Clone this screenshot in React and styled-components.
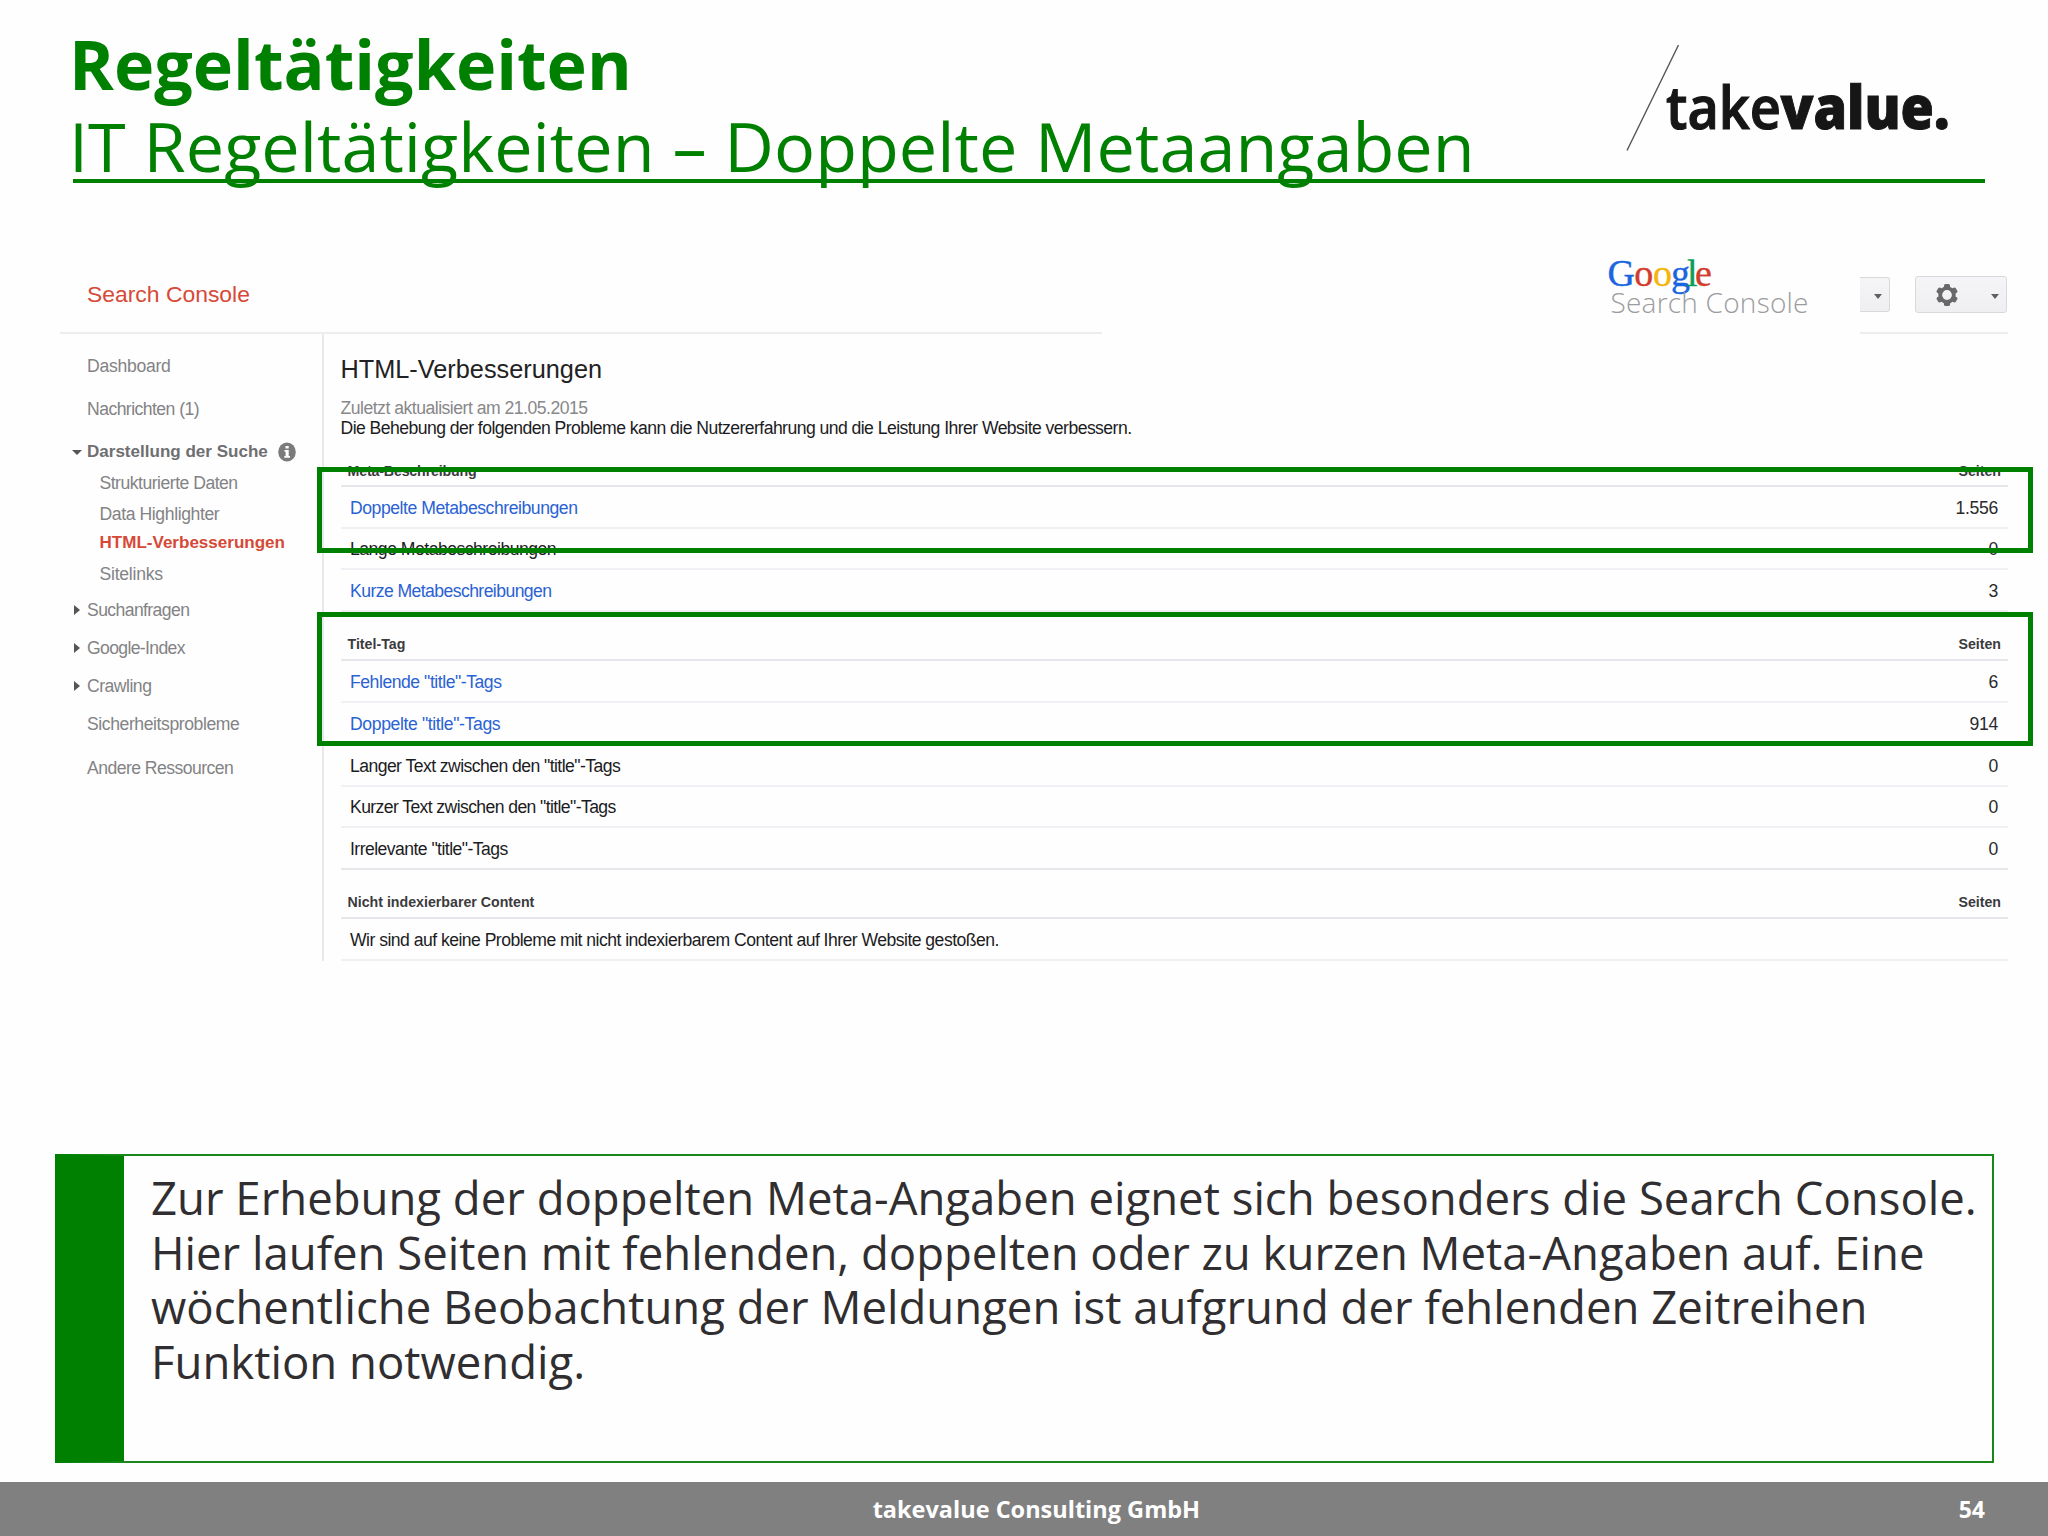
import React from 'react';
import styled, { createGlobalStyle } from 'styled-components';

const GlobalStyle = createGlobalStyle`
  * {
    box-sizing: border-box;
  }
  body {
    margin: 0;
    background-color: #fff;
  }
`;

const Slide = styled.div`
  width: 2048px;
  height: 1536px;
  display: flex;
  flex-direction: column;
  overflow: hidden;
  background-color: #fefefe;
  font-family: 'Open Sans', sans-serif;
`;

const Header = styled.header`
  display: flex;
  justify-content: space-between;
  height: 183px;
  margin: 0 63px 0 73px;
  padding-top: 23px;
  border-bottom: 4px solid #008000;
`;

const Titles = styled.div`
  margin-left: -4px;
  color: #008000;
`;

const Title = styled.h1`
  margin: 0;
  font-size: 68.2px;
  line-height: 82px;
  font-weight: 700;
  white-space: nowrap;
`;

const Subtitle = styled.h2`
  margin: 0;
  font-size: 68.35px;
  line-height: 82px;
  font-weight: 400;
  letter-spacing: 0.03px;
  white-space: nowrap;
`;

const BrandLogo = styled.svg`
  width: 350px;
  height: 120px;
  margin: 17px 27px 0 0;
  overflow: visible;
`;

const Console = styled.section`
  flex: 1;
  margin: 0 40px 0 60px;
  font-family: 'Liberation Sans', Arial, sans-serif;
`;

const TopBar = styled.div`
  display: flex;
  height: 151px;
`;

const ProductBar = styled.div`
  width: 1042px;
  padding: 97px 0 0 27px;
  border-bottom: 2px solid #ededed;
  color: #d64937;
  font-size: 22.9px;
  line-height: 28px;
`;

const GoogleLogo = styled.svg`
  width: 220px;
  height: 70px;
  margin: 67px 40px 0 498px;
`;

const Actions = styled.div`
  display: flex;
  align-items: flex-start;
  width: 148px;
  padding-top: 93px;
  border-bottom: 2px solid #ededed;
`;

const ActionButton = styled.button`
  display: flex;
  align-items: center;
  justify-content: flex-end;
  width: ${(props) => props.$width}px;
  height: ${(props) => props.$height}px;
  margin: ${(props) => props.$margin};
  padding: 0 7px 0 0;
  border: 1px solid #d9d9dc;
  border-left-width: ${(props) => (props.$cut ? 0 : 1)}px;
  border-radius: ${(props) => (props.$cut ? '0 3px 3px 0' : '3px')};
  background: linear-gradient(#f5f4f6, #efeef1);
`;

const Gear = styled.svg`
  width: 24px;
  height: 24px;
  margin-right: 32px;
`;

const Caret = styled.span`
  margin-top: 3px;
  border-left: 4.5px solid transparent;
  border-right: 4.5px solid transparent;
  border-top: 5px solid #606062;
`;

const Body = styled.div`
  display: flex;
`;

const Sidebar = styled.nav`
  width: 264px;
  height: 627px;
  border-right: 2px solid #e9e9eb;
`;

const NavItem = styled.div`
  display: flex;
  align-items: center;
  margin-top: ${(props) => props.$gap}px;
  padding-left: ${(props) => (props.$sub ? 12.5 : 0)}px;
  height: 20px;
  line-height: 20px;
  font-size: ${(props) => (props.$bold ? 17.05 : 17.6)}px;
  font-weight: ${(props) => (props.$bold ? 700 : 400)};
  letter-spacing: ${(props) => props.$tracking || 0}px;
  color: ${(props) => (props.$active ? '#d64937' : props.$bold ? '#6f6f71' : '#838385')};
  white-space: nowrap;
`;

const Marker = styled.span`
  display: flex;
  justify-content: center;
  width: 9px;
  margin: 0 6px 0 12px;
`;

const Arrow = styled.span`
  border: 5px solid transparent;
  border-width: ${(props) => (props.$open ? '5px 5px 0' : '5px 0 5px 6px')};
  border-${(props) => (props.$open ? 'top' : 'left')}-color: #555;
`;

const InfoIcon = styled.svg`
  width: 18px;
  height: 20px;
  margin-left: 10px;
`;

const Main = styled.main`
  flex: 1;
  padding: 20px 0 0 16.5px;
`;

const PageHeading = styled.h3`
  margin: 0 0 14px;
  font-size: 25.3px;
  line-height: 30px;
  font-weight: 400;
  color: #222;
`;

const Note = styled.p`
  margin: 0;
  font-size: 17.6px;
  line-height: 20px;
  color: ${(props) => (props.$muted ? '#88888a' : '#1c1c1e')};
  letter-spacing: ${(props) => props.$tracking}px;
`;

const GroupHeader = styled.div`
  display: flex;
  justify-content: space-between;
  align-items: flex-end;
  height: ${(props) => props.$height}px;
  padding: 0 7px ${(props) => props.$bottom}px;
  border-bottom: 2px solid #e7e6ea;
  font-size: 14.2px;
  line-height: 20px;
  font-weight: 700;
  color: #3b3b3d;
`;

const GroupTitle = styled.span`
  letter-spacing: ${(props) => props.$tracking || 0}px;
`;

const Row = styled.div`
  display: flex;
  justify-content: space-between;
  align-items: center;
  height: ${(props) => props.$height}px;
  padding: 2px 10px 0 9.5px;
  border-bottom: 2px solid ${(props) => (props.$last ? '#e7e6ea' : '#f1f0f4')};
  font-size: 17.6px;
  color: #1c1c1e;
`;

const RowLabel = styled.span`
  color: ${(props) => (props.$link ? '#2a62d4' : '#1c1c1e')};
  letter-spacing: ${(props) => props.$tracking}px;
`;

const RowValue = styled.span`
  letter-spacing: -0.3px;
  color: #2a2a2c;
`;

const Highlight = styled.div`
  position: absolute;
  left: 317px;
  top: ${(props) => props.$top}px;
  width: 1716px;
  height: ${(props) => props.$height}px;
  border: 5px solid #008000;
`;

const Callout = styled.section`
  height: 309px;
  margin: 0 54px 19px 55px;
  padding: 14px 0 0 27px;
  border: 2px solid #1a871a;
  border-left: 69px solid #008000;
  color: #302e30;
  font-size: 45.5px;
  line-height: 54.6px;
  white-space: nowrap;
`;

const Footer = styled.footer`
  display: flex;
  align-items: center;
  height: 54px;
  padding: 0 63px 0 88px;
  background-color: #808080;
  color: #fff;
  font-size: 23.5px;
  line-height: 54px;
  font-weight: 700;
`;

const Company = styled.span`
  flex: 1;
  padding-left: 26px;
  text-align: center;
`;

const PageNumber = styled.span`
  font-size: 23px;
`;

const navItems = [
  { label: 'Dashboard', gap: 22, tracking: -0.28 },
  { label: 'Nachrichten (1)', gap: 23, tracking: -0.55 },
  { label: 'Darstellung der Suche', gap: 23, bold: true, open: true, info: true },
  { label: 'Strukturierte Daten', gap: 11, sub: true, tracking: -0.5 },
  { label: 'Data Highlighter', gap: 11, sub: true, tracking: -0.4 },
  { label: 'HTML-Verbesserungen', gap: 9, sub: true, bold: true, active: true },
  { label: 'Sitelinks', gap: 11, sub: true, tracking: -0.25 },
  { label: 'Suchanfragen', gap: 16, closed: true, tracking: -0.6 },
  { label: 'Google-Index', gap: 18, closed: true, tracking: -0.65 },
  { label: 'Crawling', gap: 18, closed: true, tracking: -0.5 },
  { label: 'Sicherheitsprobleme', gap: 18, tracking: -0.42 },
  { label: 'Andere Ressourcen', gap: 24, tracking: -0.55 },
];

const groups = [
  {
    title: 'Meta-Beschreibung',
    height: 49,
    bottom: 4,
    tracking: -0.15,
    rows: [
      { label: 'Doppelte Metabeschreibungen', value: '1.556', link: true, height: 42, tracking: -0.45 },
      { label: 'Lange Metabeschreibungen', value: '0', height: 41, tracking: -0.5 },
      { label: 'Kurze Metabeschreibungen', value: '3', link: true, height: 42, tracking: -0.57 },
    ],
  },
  {
    title: 'Titel-Tag',
    height: 49,
    bottom: 5,
    rows: [
      { label: 'Fehlende "title"-Tags', value: '6', link: true, height: 42, tracking: -0.46 },
      { label: 'Doppelte "title"-Tags', value: '914', link: true, height: 42, tracking: -0.38 },
      { label: 'Langer Text zwischen den "title"-Tags', value: '0', height: 42, tracking: -0.56 },
      { label: 'Kurzer Text zwischen den "title"-Tags', value: '0', height: 41, tracking: -0.6 },
      { label: 'Irrelevante "title"-Tags', value: '0', height: 42, tracking: -0.55, last: true },
    ],
  },
  {
    title: 'Nicht indexierbarer Content',
    height: 49,
    bottom: 5,
    rows: [
      {
        label: 'Wir sind auf keine Probleme mit nicht indexierbarem Content auf Ihrer Website gestoßen.',
        value: '',
        height: 42,
        tracking: -0.53,
      },
    ],
  },
];

const TakevalueLogo = () => (
  <BrandLogo viewBox="0 0 350 120">
    <line x1="70.5" y1="5" x2="19" y2="110.5" stroke="#555" strokeWidth="1.4" />
    <g fill="#161616" stroke="#161616" fontFamily="'Open Sans', sans-serif" fontSize="60.5">
      <text x="58" y="88.5" fontWeight="600" strokeWidth="1.2" textLength="115" lengthAdjust="spacingAndGlyphs">
        take
      </text>
      <text x="172.5" y="88.5" fontWeight="800" strokeWidth="1" textLength="169" lengthAdjust="spacingAndGlyphs">
        value.
      </text>
    </g>
  </BrandLogo>
);

const GoogleSearchConsole = () => (
  <GoogleLogo viewBox="0 0 220 70">
    <g fontFamily="'Liberation Serif', serif" fontSize="38" strokeWidth="0.4">
      <text y="36">
        <tspan x="7.5" fill="#1a66e0" stroke="#1a66e0">G</tspan>
        <tspan x="34.3" fill="#d23c2c" stroke="#d23c2c">o</tspan>
        <tspan x="53" fill="#f5b50f" stroke="#f5b50f">o</tspan>
        <tspan x="71" fill="#1a66e0" stroke="#1a66e0">g</tspan>
        <tspan x="87" fill="#0f9d58" stroke="#0f9d58">l</tspan>
        <tspan x="95" fill="#d23c2c" stroke="#d23c2c">e</tspan>
      </text>
    </g>
    <text
      x="10.5"
      y="63"
      fill="#9c9c9e"
      fontFamily="'Open Sans', sans-serif"
      fontSize="28"
      fontWeight="300"
      textLength="198"
    >
      Search Console
    </text>
  </GoogleLogo>
);

const GearIcon = () => (
  <Gear viewBox="0 0 24 24">
    <g fill="#69696b">
      {[0, 60, 120, 180, 240, 300].map((angle) => (
        <rect key={angle} x="9" y="1" width="6" height="6" rx="1.5" transform={`rotate(${angle} 12 12)`} />
      ))}
    </g>
    <circle cx="12" cy="12" r="6.8" fill="none" stroke="#69696b" strokeWidth="3.8" />
  </Gear>
);

const App = () => {
  return (
    <>
      <GlobalStyle />
      <Slide>
        <Header>
          <Titles>
            <Title>Regeltätigkeiten</Title>
            <Subtitle>IT Regeltätigkeiten – Doppelte Metaangaben</Subtitle>
          </Titles>
          <TakevalueLogo />
        </Header>

        <Console>
          <TopBar>
            <ProductBar>Search Console</ProductBar>
            <GoogleSearchConsole />
            <Actions>
              <ActionButton $width={30} $height={35} $margin="1px 25px 0 0" $cut>
                <Caret />
              </ActionButton>
              <ActionButton $width={92} $height={37} $margin="0">
                <GearIcon />
                <Caret />
              </ActionButton>
            </Actions>
          </TopBar>
          <Body>
            <Sidebar>
              {navItems.map((item) => (
                <NavItem
                  key={item.label}
                  $gap={item.gap}
                  $sub={item.sub}
                  $bold={item.bold}
                  $active={item.active}
                  $tracking={item.tracking}
                >
                  <Marker>{(item.open || item.closed) && <Arrow $open={item.open} />}</Marker>
                  {item.label}
                  {item.info && (
                    <InfoIcon viewBox="0 0 18 20">
                      <ellipse cx="9" cy="10" rx="8.8" ry="9.5" fill="#7b7b7d" />
                      <path d="M7.5 4h3.2v2.6H7.5zM6.5 8h4.2v6H12v1.8H6.3V14h1.3V9.8H6.5z" fill="#fff" />
                    </InfoIcon>
                  )}
                </NavItem>
              ))}
            </Sidebar>
            <Main>
              <PageHeading>HTML-Verbesserungen</PageHeading>
              <Note $muted $tracking={-0.5}>
                Zuletzt aktualisiert am 21.05.2015
              </Note>
              <Note $tracking={-0.55}>
                Die Behebung der folgenden Probleme kann die Nutzererfahrung und die Leistung Ihrer Website verbessern.
              </Note>
              {groups.map((group) => (
                <div key={group.title}>
                  <GroupHeader $height={group.height} $bottom={group.bottom}>
                    <GroupTitle $tracking={group.tracking}>{group.title}</GroupTitle>
                    <GroupTitle>Seiten</GroupTitle>
                  </GroupHeader>
                  {group.rows.map((row) => (
                    <Row key={row.label} $height={row.height} $last={row.last}>
                      <RowLabel $link={row.link} $tracking={row.tracking}>
                        {row.label}
                      </RowLabel>
                      <RowValue>{row.value}</RowValue>
                    </Row>
                  ))}
                </div>
              ))}
            </Main>
          </Body>
        </Console>

        <Callout>
          Zur Erhebung der doppelten Meta-Angaben eignet sich besonders die Search Console.
          <br />
          Hier laufen Seiten mit fehlenden, doppelten oder zu kurzen Meta-Angaben auf. Eine
          <br />
          wöchentliche Beobachtung der Meldungen ist aufgrund der fehlenden Zeitreihen
          <br />
          Funktion notwendig.
        </Callout>

        <Footer>
          <Company>takevalue Consulting GmbH</Company>
          <PageNumber>54</PageNumber>
        </Footer>

        <Highlight $top={467} $height={86} />
        <Highlight $top={612} $height={134} />
      </Slide>
    </>
  );
};

export default App;
